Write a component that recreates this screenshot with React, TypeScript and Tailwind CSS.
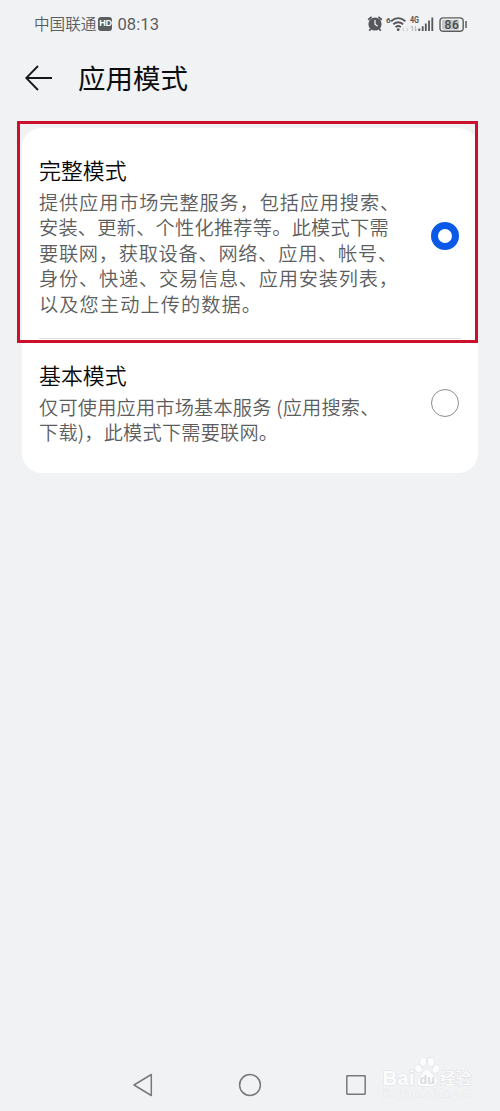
import React from 'react';

interface Line {
  text: string;
  tracking: string;
}

interface ModeOptionProps {
  title: string;
  lines: Line[];
  selected: boolean;
}

const ModeOption: React.FC<ModeOptionProps> = ({ title, lines, selected }) => {
  return (
    <div className="flex items-center justify-between pl-[17px] pr-[19.5px]">
      <div className="-my-px">
        <h2 className="text-[21.9px] leading-[30px] font-[350] text-[#080808]">{title}</h2>
        <p className="mt-[4.5px] text-[19.2px] leading-[25.5px] font-[350] text-[#5c5d5e]">
          {lines.map((line) => (
            <span key={line.text} className={`block h-[25.5px] whitespace-nowrap ${line.tracking}`}>
              {line.text}
            </span>
          ))}
        </p>
      </div>
      {selected ? (
        <span className="h-[28px] w-[28px] shrink-0 rounded-full border-[7px] border-[#0a59e8] bg-white" />
      ) : (
        <span className="h-[28px] w-[28px] shrink-0 rounded-full border border-[#8c8d8e] bg-white" />
      )}
    </div>
  );
};

const StatusBar: React.FC = () => (
  <div className="flex h-12 items-center pl-[34px] pr-[32px] text-[#5c5d5f]">
    <span className="-mt-[2px] text-[15.6px] leading-6 font-[350]">中国联通</span>
    <span className="ml-[2px] flex h-[14px] w-[14px] items-center justify-center rounded-[3px] bg-[#5c5d5f] font-['Liberation_Sans'] text-[9px] font-bold tracking-[-0.3px] text-white">
      HD
    </span>
    <span className="ml-[5px] mt-[2px] font-['Roboto'] text-[16.6px] tracking-[0.1px]">08:13</span>

    <svg className="ml-auto" width="101" height="20" viewBox="0 0 101 20" fill="none">
      {/* Alarm */}
      <circle cx="8" cy="10" r="6.6" fill="#55575a" />
      <path d="M1.2 5.8 4.6 2.9M14.8 5.8 11.4 2.9M3.8 14.8 2.3 16.8M12.2 14.8l1.5 2" stroke="#55575a" strokeWidth="1.8" />
      <path d="M8 6v4.2l2.6 2" stroke="#f1f2f4" strokeWidth="1.3" />
      {/* Wi-Fi 6 */}
      <text x="19" y="8.6" fontSize="8" fontWeight="700" fill="#55575a" fontFamily="Roboto, sans-serif">6</text>
      <path d="M24 7.2q7.2-6.2 14.4 0M26.3 10.3q4.9-4.2 9.8 0M28.5 13.1q2.7-2.2 5.4 0" stroke="#55575a" strokeWidth="1.8" />
      <circle cx="31.2" cy="15.7" r="1.4" fill="#55575a" />
      <path d="m37 14-1.6 1.5L37 17m2.5-3 1.6 1.5-1.6 1.5" stroke="#c3c5c7" strokeWidth="1" />
      {/* Mobile signal */}
      <text x="43" y="8.8" fontSize="8.6" fontWeight="700" fill="#55575a" fontFamily="Roboto, sans-serif" textLength="9" lengthAdjust="spacingAndGlyphs">4G</text>
      <path d="M45.4 17v-5l-1.5 1.7M48.4 12v5l1.5-1.7" stroke="#b4b6b8" strokeWidth="1" />
      <path d="M52.3 14.5v2.6M55.7 12.2v4.9M58.8 9.4v7.7M62 6.4v10.7M65.3 3.6v13.5" stroke="#55575a" strokeWidth="1.8" />
      {/* Battery */}
      <rect x="73" y="3.9" width="23.2" height="13.4" rx="3.3" stroke="#5c5d5f" strokeWidth="1.4" />
      <rect x="75" y="5.8" width="17" height="9.6" rx="1.4" fill="#c5c6c8" />
      <text x="77.4" y="15" fontSize="12" fontWeight="500" fill="#48494b" fontFamily="Roboto, sans-serif" textLength="14.4">86</text>
      <path d="M99 7v7" stroke="#5c5d5f" strokeWidth="1.5" />
    </svg>
  </div>
);

const Watermark: React.FC = () => (
  <svg className="absolute left-[380px] top-[1053px]" width="96" height="50" viewBox="0 0 96 50">
    <g fill="#fcfcfd" stroke="#e0e2e4" strokeWidth="1.2" className="[paint-order:stroke]">
      <ellipse cx="38.5" cy="15.5" rx="3.2" ry="4" transform="rotate(-20 38.5 15.5)" />
      <ellipse cx="43.3" cy="8.7" rx="3.2" ry="4.4" />
      <ellipse cx="51" cy="8.9" rx="3.2" ry="4.2" />
      <ellipse cx="56" cy="16" rx="3.2" ry="4" transform="rotate(20 56 16)" />
      <path d="M46.5 16.5c3.7 0 4.2 3.6 7 6 3.3 2.8 4.2 4.8 3.3 7.6-1.1 3.4-4.7 2.9-9.3 2.9s-8.4.7-9.7-2.7c-1.2-3 .2-5.3 3.3-8 2.5-2.2 2.2-5.8 5.4-5.8z" />
      <text x="2.5" y="32" fontSize="21" fontWeight="700" fontFamily="Liberation Sans, sans-serif" textLength="32" lengthAdjust="spacingAndGlyphs">Bai</text>
      <text x="60" y="30.5" fontSize="15.5" fontWeight="500" fontFamily="Noto Sans CJK SC, sans-serif" textLength="31">经验</text>
    </g>
    <text x="39.6" y="30.5" fontSize="12.5" fontWeight="700" fill="#d9dbde" fontFamily="Liberation Sans, sans-serif">du</text>
    <text x="3" y="44.3" fontSize="10" fill="#f9fafb" stroke="#e5e7e9" strokeWidth="0.8" className="[paint-order:stroke]" fontFamily="Liberation Sans, sans-serif" textLength="89">jingyan.baidu.com</text>
  </svg>
);

const App: React.FC = () => {
  return (
    <div className="relative flex h-[1111px] w-[500px] flex-col overflow-hidden bg-[#f1f2f4] font-['Noto_Sans_CJK_SC',sans-serif]">
      <StatusBar />

      <header className="flex h-[60px] items-center pl-[25px]">
        <svg width="28" height="26" viewBox="0 0 28 26" fill="none" stroke="#161718" strokeWidth="1.8">
          <path d="M27 13H1.5M13 1 1.2 13 13 25" />
        </svg>
        <h1 className="-mt-[2px] ml-[25px] text-[27.5px] leading-[40px] font-normal text-[#0c0d0e]">应用模式</h1>
      </header>

      <main className="mt-5 ml-[22px] h-[345px] w-[456px] rounded-[20px] bg-white pt-[28px]">
        <ModeOption
          title="完整模式"
          selected
          lines={[
            { text: '提供应用市场完整服务，包括应用搜索、', tracking: 'tracking-[0.87px]' },
            { text: '安装、更新、个性化推荐等。此模式下需', tracking: 'tracking-[0.25px]' },
            { text: '要联网，获取设备、网络、应用、帐号、', tracking: 'tracking-[0.75px]' },
            { text: '身份、快递、交易信息、应用安装列表，', tracking: 'tracking-[0.8px]' },
            { text: '以及您主动上传的数据。', tracking: 'tracking-[1.1px]' },
          ]}
        />
        <div className="mx-[17px] mt-[22px] h-px bg-[#dcdddf]" />
        <div className="pt-[22px]">
          <ModeOption
            title="基本模式"
            selected={false}
            lines={[
              { text: '仅可使用应用市场基本服务 (应用搜索、', tracking: 'tracking-[0.2px]' },
              { text: '下载)，此模式下需要联网。', tracking: 'tracking-[0.2px]' },
            ]}
          />
        </div>
      </main>

      {/* Highlight frame around the first option */}
      <div className="absolute left-[17px] top-[121px] h-[222px] w-[461px] border-[3px] border-[#cb102b]" />

      <nav className="mt-auto flex h-[53px] items-center justify-between pl-[133px] pr-[134px]">
        <svg width="20" height="24" viewBox="0 0 20 24" fill="none" stroke="#77797b" strokeWidth="1.5" strokeLinejoin="round">
          <path d="M18.3 1.5v21L1 12z" />
        </svg>
        <svg width="24" height="24" viewBox="0 0 24 24" fill="none" stroke="#77797b" strokeWidth="1.5">
          <circle cx="12" cy="12" r="10.4" />
        </svg>
        <svg width="20" height="20" viewBox="0 0 20 20" fill="none" stroke="#77797b" strokeWidth="1.5">
          <rect x="0.8" y="0.8" width="18.4" height="18.4" rx="0.6" />
        </svg>
      </nav>

      <Watermark />
    </div>
  );
};

export default App;
